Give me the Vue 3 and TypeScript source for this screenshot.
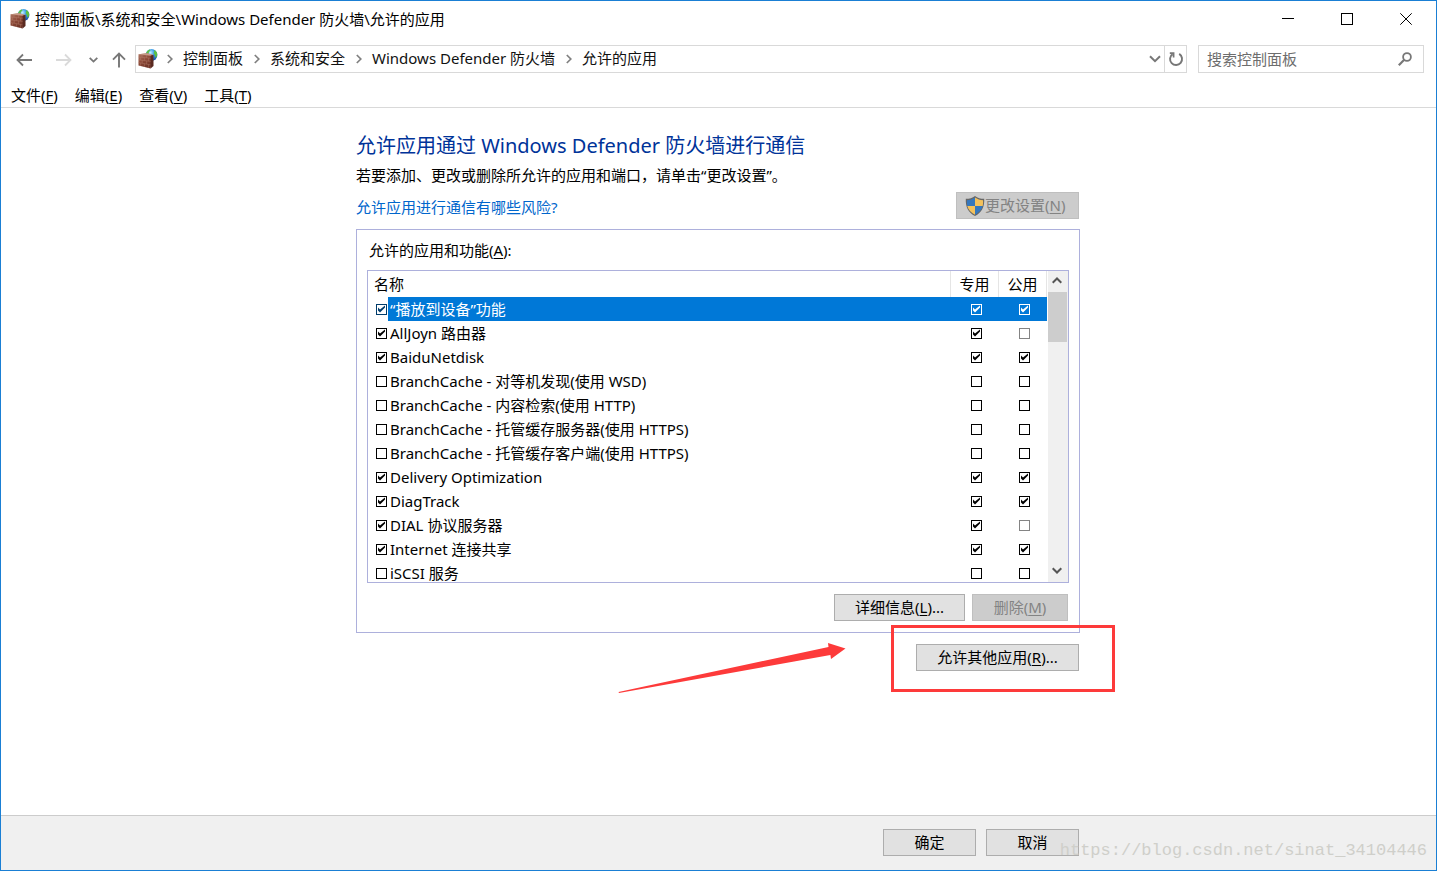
<script setup lang="ts">
import { ref } from 'vue'

interface AppRule {
  name: string
  enabled: boolean
  priv: boolean
  pub: boolean
  pubDisabled?: boolean
}

const crumbs: string[] = ['控制面板', '系统和安全', 'Windows Defender 防火墙', '允许的应用']

const menus: { text: string; key: string }[] = [
  { text: '文件', key: 'F' },
  { text: '编辑', key: 'E' },
  { text: '查看', key: 'V' },
  { text: '工具', key: 'T' },
]

const rules = ref<AppRule[]>([
  { name: '“播放到设备”功能', enabled: true, priv: true, pub: true },
  { name: 'AllJoyn 路由器', enabled: true, priv: true, pub: false, pubDisabled: true },
  { name: 'BaiduNetdisk', enabled: true, priv: true, pub: true },
  { name: 'BranchCache - 对等机发现(使用 WSD)', enabled: false, priv: false, pub: false },
  { name: 'BranchCache - 内容检索(使用 HTTP)', enabled: false, priv: false, pub: false },
  { name: 'BranchCache - 托管缓存服务器(使用 HTTPS)', enabled: false, priv: false, pub: false },
  { name: 'BranchCache - 托管缓存客户端(使用 HTTPS)', enabled: false, priv: false, pub: false },
  { name: 'Delivery Optimization', enabled: true, priv: true, pub: true },
  { name: 'DiagTrack', enabled: true, priv: true, pub: true },
  { name: 'DIAL 协议服务器', enabled: true, priv: true, pub: false, pubDisabled: true },
  { name: 'Internet 连接共享', enabled: true, priv: true, pub: true },
  { name: 'iSCSI 服务', enabled: false, priv: false, pub: false },
])

const selected = ref<number>(0)
const query = ref<string>('')
</script>

<template>
  <div class="window">
    <svg class="defs" width="0" height="0" aria-hidden="true">
      <defs>
        <radialGradient id="globe" cx="0.4" cy="0.3" r="0.8">
          <stop offset="0" stop-color="#c4efff" />
          <stop offset="0.4" stop-color="#3f9fe8" />
          <stop offset="1" stop-color="#0b3f9c" />
        </radialGradient>
        <linearGradient id="brick" x1="0" y1="0" x2="0.6" y2="1">
          <stop offset="0" stop-color="#b07a66" />
          <stop offset="0.5" stop-color="#8d4a38" />
          <stop offset="1" stop-color="#6b3226" />
        </linearGradient>
        <symbol id="firewall" viewBox="0 0 20 20">
          <circle cx="13.500" cy="6" r="5.900" fill="url(#globe)" />
          <path d="M8.400 3.400C9.200 1.800 10.600.8 12 .5l.4 1.200-1.400 1-.4 1.800-1.200 1.500H7.800zM16.400 1c1.600.9 2.600 2.300 2.900 4l-.8 3-1.300.6-.3-2.500-1.200-1.700z" fill="#5cc043" />
          <path d="M.5 5.200 9 4.200l5.800 1.900L12.600 19.500.5 16.400z" fill="url(#brick)" />
          <path d="M.5 5.200 9 4.200l6.300 1.600-2.700.9z" fill="#c79c89" />
          <path d="M12.600 6.700l2.900-.9v11.300l-2.900 2.400z" fill="#5a2a20" />
          <path d="M.5 8l12.100 1.200M.5 10.800l12.100 1.600M.5 13.500l12.100 2.400M4 5.600v2.700M8.600 6.200v2.600M2.400 8.200V11M6.400 8.600v2.900M10.600 9v3.100M4.200 11.300v2.900M8.600 11.900v3.200M2.400 13.900v3M6.400 14.700v3.200M10.600 15.500v3.500" stroke="#b98472" stroke-width=".4" fill="none" />
        </symbol>
      </defs>
    </svg>

    <header class="titlebar">
      <svg class="app-icon"><use href="#firewall" /></svg>
      <span class="title">控制面板\系统和安全\Windows Defender 防火墙\允许的应用</span>
      <div class="caption">
        <button type="button" aria-label="最小化">
          <svg width="12" height="12" shape-rendering="crispEdges"><path d="M0 5.500h12" stroke="#000" /></svg>
        </button>
        <button type="button" aria-label="最大化">
          <svg width="12" height="12" shape-rendering="crispEdges"><path d="M.5.5h11v11H.5z" stroke="#000" fill="none" /></svg>
        </button>
        <button type="button" aria-label="关闭">
          <svg width="12" height="12"><path d="M.3.3l11.400 11.400M11.700.3.3 11.700" stroke="#000" /></svg>
        </button>
      </div>
    </header>

    <nav class="navbar">
      <div class="nav-buttons">
        <button type="button" class="back" aria-label="后退">
          <svg width="16" height="14" fill="none" stroke="#777" stroke-width="1.800"><path d="M16 7H1.500M7 1.500 1.500 7 7 12.500" /></svg>
        </button>
        <button type="button" class="forward" aria-label="前进" disabled>
          <svg width="16" height="14" fill="none" stroke="#dadada" stroke-width="1.800"><path d="M0 7h14.500M9 1.500 14.500 7 9 12.500" /></svg>
        </button>
        <button type="button" class="recent" aria-label="最近">
          <svg width="9" height="6" fill="none" stroke="#777" stroke-width="1.800"><path d="M.7.8 4.500 4.600 8.300.8" /></svg>
        </button>
        <button type="button" class="up" aria-label="上移">
          <svg width="14" height="16" fill="none" stroke="#777" stroke-width="1.900"><path d="M7 15.500V1.800M1 7.600l6-6 6 6" /></svg>
        </button>
      </div>
      <div class="address">
        <svg class="app-icon"><use href="#firewall" /></svg>
        <template v-for="crumb in crumbs" :key="crumb">
          <svg class="sep" width="6" height="10" fill="none" stroke="#808080" stroke-width="1.700"><path d="M.8 1l4 4-4 4" /></svg>
          <a href="#">{{ crumb }}</a>
        </template>
        <button type="button" class="drop" aria-label="展开">
          <svg width="12" height="8" fill="none" stroke="#777" stroke-width="2"><path d="M1 1.200l5 5 5-5" /></svg>
        </button>
        <button type="button" class="refresh" aria-label="刷新">
          <svg width="16" height="16" fill="none" stroke="#777" stroke-width="1.900"><path d="M11.200 2.900a6 6 0 1 1-6.600.2" /><path d="M1.800 2.200h3.800v4.200" stroke-width="1.700" /></svg>
        </button>
      </div>
      <label class="search">
        <input v-model="query" type="text" placeholder="搜索控制面板" aria-label="搜索控制面板" />
        <svg width="14" height="14" fill="none" stroke="#777"><circle cx="9" cy="5" r="3.900" stroke-width="1.800" /><path d="M6.200 7.800.8 13.200" stroke-width="2.200" /></svg>
      </label>
    </nav>

    <div class="menubar">
      <button v-for="m in menus" :key="m.key" type="button">{{ m.text }}(<u>{{ m.key }}</u>)</button>
    </div>

    <main class="main">
      <section class="content">
        <h1>允许应用通过 Windows Defender 防火墙进行通信</h1>
        <p>若要添加、更改或删除所允许的应用和端口，请单击“更改设置”。</p>
        <div class="risk-row">
          <a href="#">允许应用进行通信有哪些风险?</a>
          <button type="button" class="btn change" disabled>
            <svg width="20" height="20" viewBox="0 0 20 20">
              <path d="M10 0C7.500 2 4.500 2.800.8 2.800.4 11 3.300 16.800 10 20c6.700-3.200 9.600-9 9.200-17.200C15.500 2.800 12.500 2 10 0z" fill="#666" />
              <path d="M10 1.600V10H2.300C1.900 8.300 1.800 6.400 1.900 4.200 5 4.100 7.500 3.300 10 1.600z" fill="#3577bd" />
              <path d="M10 1.600V10h7.700c.4-1.700.5-3.600.4-5.800C15 4.100 12.500 3.300 10 1.600z" fill="#f3c15c" />
              <path d="M10 10v8.700C6 16.700 3.300 13.900 2.300 10z" fill="#f3c15c" />
              <path d="M10 10v8.700c4-2 6.700-4.800 7.700-8.700z" fill="#3577bd" />
            </svg>
            <span>更改设置(<u>N</u>)</span>
          </button>
        </div>

        <div class="panel">
          <div id="list-label" class="list-label">允许的应用和功能(<u>A</u>):</div>
          <div class="listbox">
            <table aria-labelledby="list-label">
              <thead>
                <tr>
                  <th scope="col" class="name">名称</th>
                  <th scope="col">专用</th>
                  <th scope="col">公用</th>
                </tr>
              </thead>
              <tbody>
                <tr v-for="(r, i) in rules" :key="r.name" :class="{ selected: i === selected }" @click="selected = i">
                  <td class="name">
                    <div class="name-cell">
                      <input :id="'rule-' + i" v-model="r.enabled" type="checkbox" />
                      <label :for="'rule-' + i">{{ r.name }}</label>
                    </div>
                  </td>
                  <td><input v-model="r.priv" type="checkbox" :aria-label="r.name + ' 专用'" /></td>
                  <td><input v-model="r.pub" type="checkbox" :disabled="r.pubDisabled" :aria-label="r.name + ' 公用'" /></td>
                </tr>
              </tbody>
            </table>
            <div class="scrollbar">
              <button type="button" aria-label="向上滚动">
                <svg width="10" height="7" fill="none" stroke="#555" stroke-width="2"><path d="M.7 5.800 5 1.500l4.300 4.300" /></svg>
              </button>
              <div class="track"><div class="thumb"></div></div>
              <button type="button" aria-label="向下滚动">
                <svg width="10" height="7" fill="none" stroke="#555" stroke-width="2"><path d="M.7 1.200 5 5.500l4.300-4.300" /></svg>
              </button>
            </div>
          </div>
          <div class="actions">
            <button type="button" class="btn details">详细信息(<u>L</u>)...</button>
            <button type="button" class="btn remove" disabled>删除(<u>M</u>)</button>
          </div>
        </div>

        <div class="other-row">
          <svg class="arrow" width="230" height="52" viewBox="0 0 230 52">
            <path d="M.5 49 210.500 4 210 0l17.500 5.400L213 16l-.6-4L1 50z" fill="#fd3a3a" />
          </svg>
          <div class="marker"></div>
          <button type="button" class="btn other">允许其他应用(<u>R</u>)...</button>
        </div>
      </section>
    </main>

    <footer class="footer">
      <div class="footer-inner">
        <button type="button" class="btn confirm">确定</button>
        <button type="button" class="btn confirm">取消</button>
      </div>
      <span class="watermark">https://blog.csdn.net/sinat_34104446</span>
    </footer>
  </div>
</template>

<style>
body {
  margin: 0;
}
</style>

<style scoped>
.window {
  box-sizing: border-box;
  min-height: 100vh;
  display: flex;
  flex-direction: column;
  border: 1px solid #1a7fd4;
  background: #fff;
  color: #000;
  font-family: 'Noto Sans', 'Noto Sans CJK SC', sans-serif;
  font-size: 15px;
  line-height: 24px;
}
.window * {
  box-sizing: border-box;
}
.defs {
  position: absolute;
}
svg {
  display: block;
  flex: none;
}
button {
  font: inherit;
  color: inherit;
  background: none;
  border: 0;
  padding: 0;
  white-space: nowrap;
}
u {
  text-underline-offset: 2px;
}
a {
  text-decoration: none;
  color: inherit;
}
.app-icon {
  width: 20px;
  height: 20px;
}

.titlebar {
  display: flex;
  align-items: center;
  height: 36px;
  padding-left: 9px;
}
.title {
  margin-left: 5px;
  padding-bottom: 1px;
  white-space: nowrap;
}
.caption {
  display: flex;
  height: 100%;
  margin-left: auto;
}
.caption button {
  width: 59px;
  display: grid;
  place-items: center;
  padding-right: 1px;
}

.navbar {
  display: flex;
  height: 28px;
  margin-top: 8px;
  padding: 0 12px 0 15px;
}
.nav-buttons {
  display: flex;
  align-items: center;
  width: 119px;
  padding-top: 2px;
}
.forward {
  margin-left: 24px;
}
.recent {
  margin-left: 17px;
}
.up {
  margin-left: 14px;
}
.address {
  flex: 1;
  display: flex;
  align-items: center;
  border: 1px solid #d9d9d9;
  padding-left: 2px;
  color: #111;
  white-space: nowrap;
}
.address a {
  padding-bottom: 2px;
}
.sep {
  margin: 0 10px 0 11px;
}
.app-icon + .sep {
  margin-left: 9px;
}
.drop {
  margin-left: auto;
  margin-right: 3px;
}
.refresh {
  width: 22px;
  height: 100%;
  border-left: 1px solid #d9d9d9;
  display: grid;
  place-items: center;
}
.search {
  width: 226px;
  margin-left: 11px;
  border: 1px solid #d9d9d9;
  display: flex;
  align-items: center;
  padding: 0 11px 0 8px;
}
.search input {
  flex: 1;
  min-width: 0;
  border: 0;
  padding: 0;
  outline: 0;
  font: inherit;
  background: none;
}
.search input::placeholder {
  color: #6d6d6d;
}

.menubar {
  display: flex;
  gap: 17px;
  padding: 10px 10px 0;
  border-bottom: 1px solid #d9d9d9;
}

.main {
  flex: 1;
  display: flex;
  flex-direction: column;
  align-items: center;
  padding: 22px 1px 24px 0;
}
.content {
  width: 724px;
}
h1 {
  margin: 0;
  font-size: 20px;
  line-height: 32px;
  font-weight: 400;
  color: #003399;
}
p {
  margin: 1px 0 0;
}
.risk-row {
  display: flex;
  justify-content: space-between;
  align-items: flex-start;
  margin-top: 5px;
  padding-right: 1px;
}
.risk-row a {
  margin-top: 3px;
  color: #0066cc;
}

.btn {
  height: 27px;
  border: 1px solid #adadad;
  background: #e1e1e1;
  line-height: 24px;
  padding-bottom: 2px;
}
.btn:disabled {
  border-color: #bfbfbf;
  background: #cccccc;
  color: #838383;
}
.change {
  width: 123px;
  display: flex;
  align-items: center;
  padding: 0 0 0 8px;
}
.change span {
  padding-bottom: 1px;
}
.details {
  width: 131px;
}
.remove {
  width: 96px;
}
.other {
  width: 163px;
}
.confirm {
  width: 93px;
}

.panel {
  margin-top: 10px;
  border: 1px solid #adb0dc;
  padding: 8px 10px 11px;
}
.list-label {
  padding-left: 2px;
}
.listbox {
  display: flex;
  height: 313px;
  margin-top: 8px;
  border: 1px solid #adb0dc;
  overflow: hidden;
}
table {
  flex: 1;
  table-layout: fixed;
  border-collapse: separate;
  border-spacing: 0;
  align-self: flex-start;
}
th {
  width: 48px;
  height: 26px;
  padding: 0;
  font-weight: 400;
  border-right: 1px solid #e5e5e5;
}
th.name {
  width: auto;
  padding-left: 6px;
  text-align: left;
}
td {
  height: 24px;
  padding: 0 0 0 20px;
}
td.name {
  padding: 0 0 0 8px;
}
td > input {
  display: block;
}
.name-cell {
  display: flex;
  align-items: center;
}
.name-cell label {
  flex: 1;
  margin-left: 1px;
  padding-left: 2px;
  height: 24px;
  white-space: nowrap;
}
.selected label,
.selected td:not(.name) {
  background: #0078d7;
  color: #fff;
}
input[type='checkbox'] {
  appearance: none;
  width: 11px;
  height: 11px;
  margin: 0;
  border: 1px solid #000;
  background: #fff;
  color: #000;
}
input[type='checkbox']:checked::after {
  content: '';
  display: block;
  width: 9px;
  height: 9px;
  background: currentColor;
  clip-path: polygon(1px 3px, 3px 5px, 8px 1px, 8px 3px, 3px 8px, 1px 6px);
}
input[type='checkbox']:disabled {
  border-color: #848484;
}
.selected .name input[type='checkbox'] {
  border-color: #003c6b;
  color: #003c6b;
}
.selected td:not(.name) input[type='checkbox'] {
  border-color: #fff;
  background: #0078d7;
  color: #fff;
}

.scrollbar {
  width: 20px;
  margin-left: 1px;
  display: flex;
  flex-direction: column;
  background: #f0f0f0;
}
.scrollbar button {
  height: 21px;
  display: grid;
  place-items: center;
  padding: 0 2px 2px 0;
}
.track {
  flex: 1;
}
.thumb {
  height: 50px;
  margin-right: 1px;
  background: #cdcdcd;
}

.actions {
  display: flex;
  justify-content: flex-end;
  gap: 7px;
  margin-top: 11px;
  padding-right: 1px;
}
.other-row {
  position: relative;
  display: flex;
  justify-content: flex-end;
  margin-top: 11px;
  padding-right: 1px;
}
.marker {
  position: absolute;
  top: -19px;
  right: -35px;
  width: 224px;
  height: 67px;
  border: 3px solid #fd3a3a;
  pointer-events: none;
}
.arrow {
  position: absolute;
  top: -1px;
  right: 232px;
}

.footer {
  position: relative;
  display: flex;
  justify-content: center;
  border-top: 1px solid #cccccc;
  background: #f0f0f0;
  padding: 13px 1px 14px 0;
}
.footer-inner {
  width: 724px;
  display: flex;
  justify-content: flex-end;
  gap: 10px;
  padding-right: 1px;
}
.watermark {
  position: absolute;
  right: 9px;
  bottom: 7px;
  font-family: 'Liberation Mono', monospace;
  font-size: 17px;
  color: #cfcfca;
  pointer-events: none;
}
</style>
